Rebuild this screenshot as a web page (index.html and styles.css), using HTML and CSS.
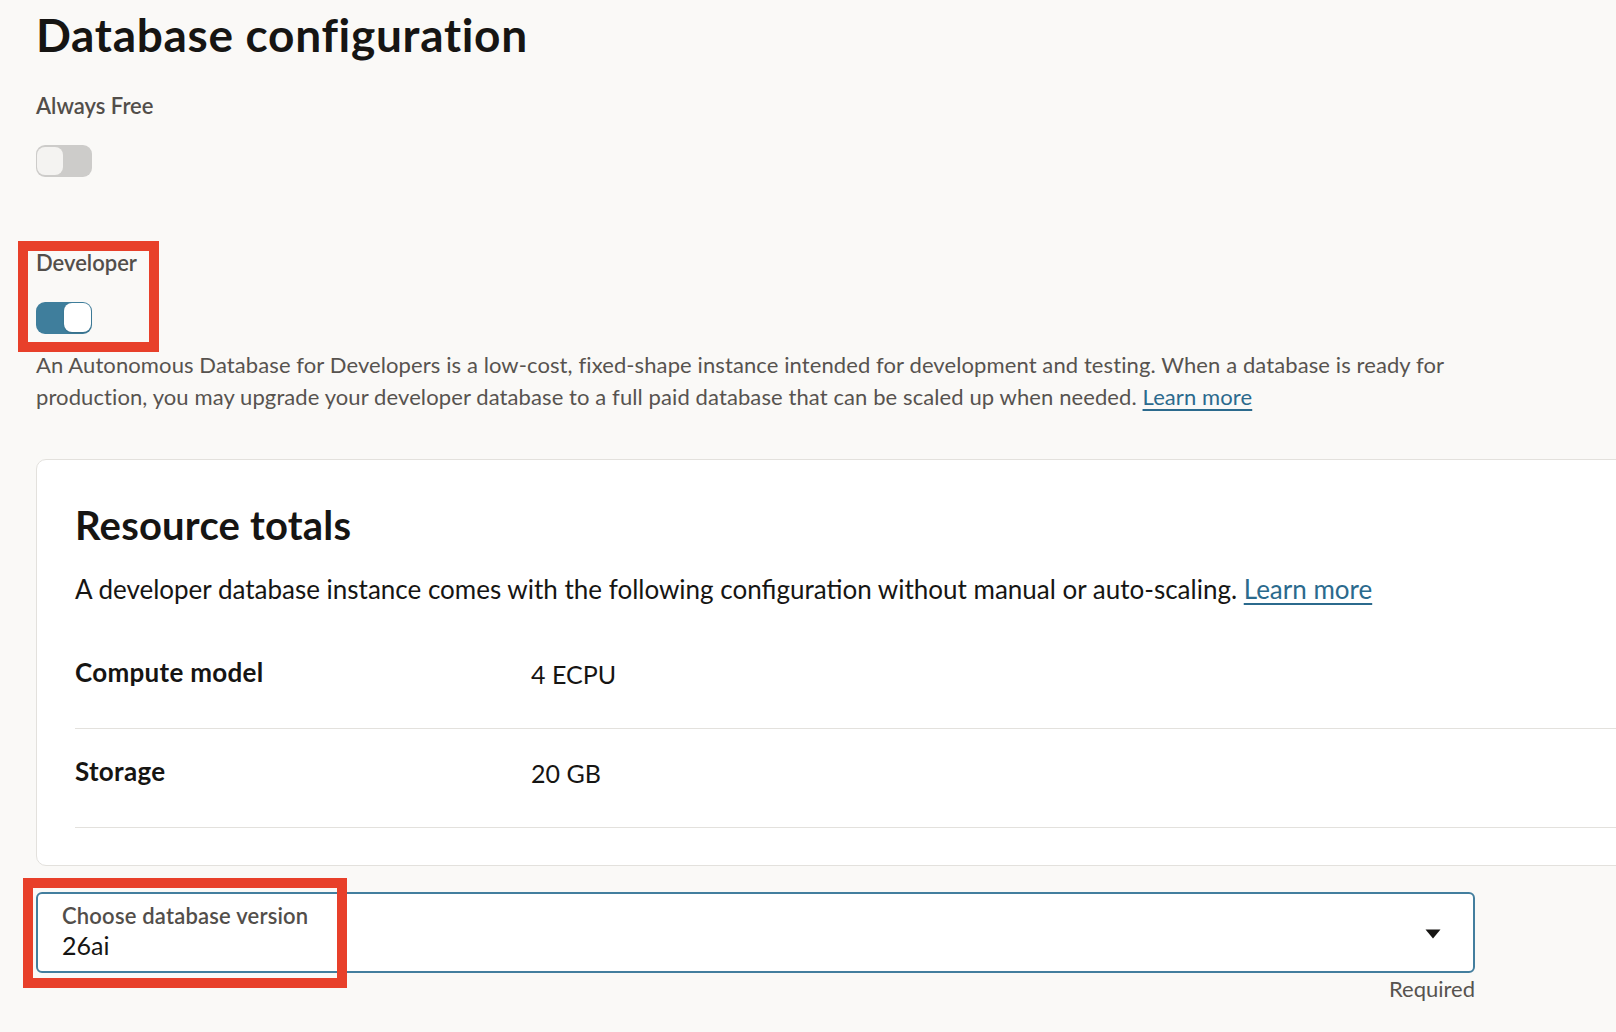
FILE: index.html
```html
<!DOCTYPE html>
<html lang="en">
<head>
<meta charset="utf-8">
<title>Database configuration</title>
<link rel="stylesheet" href="styles.css">
</head>
<body>
<main class="page">
  <h1 class="title">Database configuration</h1>

  <div class="field field-free">
    <div class="field-label">Always Free</div>
    <span class="switch switch-off" role="switch" aria-checked="false"><span class="knob"></span></span>
  </div>

  <div class="field field-dev annot-dev">
    <div class="field-label">Developer</div>
    <span class="switch switch-on" role="switch" aria-checked="true"><span class="knob"></span></span>
  </div>

  <p class="help">An Autonomous Database for Developers is a low-cost, fixed-shape instance intended for development and testing. When a database is ready for production, you may upgrade your developer database to a full paid database that can be scaled up when needed. <a class="link" href="#">Learn more</a></p>

  <section class="card">
    <h2 class="card-title">Resource totals</h2>
    <p class="card-desc">A developer database instance comes with the following configuration without manual or auto-scaling. <a class="link" href="#">Learn more</a></p>
    <dl class="rows">
      <div class="row"><dt class="row-label">Compute model</dt><dd class="row-value">4 ECPU</dd></div>
      <div class="row"><dt class="row-label">Storage</dt><dd class="row-value">20 GB</dd></div>
    </dl>
  </section>

  <div class="select-field">
    <div class="select annot-select">
      <div class="select-text">
        <div class="select-label">Choose database version</div>
        <div class="select-value">26ai</div>
      </div>
      <svg class="caret" width="16" height="10" viewBox="0 0 16 10" aria-hidden="true"><path d="M0.5 0.5 H15.5 L8 9.5 Z" fill="#161513"/></svg>
    </div>
    <div class="required">Required</div>
  </div>
</main>
</body>
</html>
```

FILE: styles.css
```css
html, body {
  margin: 0;
  padding: 0;
}
body {
  background: #faf9f7;
  font-family: Lato, "Noto Sans", "Liberation Sans", sans-serif;
  color: #161513;
  overflow-x: hidden;
}
.page {
  padding: 7px 0 40px 36px;
  width: 1440px;
}
.title {
  margin: 0;
  font-size: 46px;
  line-height: 56px;
  font-weight: 700;
  letter-spacing: 0.7px;
  color: #161513;
}
.field {
  display: flex;
  flex-direction: column;
  align-items: flex-start;
  gap: 27px;
}
.field-free {
  margin-top: 31px;
}
.field-dev {
  margin-top: 74px;
}
.field-label {
  font-size: 22px;
  line-height: 24px;
  font-weight: 600;
  color: #524e4a;
}
.switch {
  display: flex;
  width: 56px;
  height: 32px;
  box-sizing: border-box;
  border-radius: 9px;
  padding: 2px;
}
.switch .knob {
  width: 26px;
  height: 28px;
  box-sizing: border-box;
  border-radius: 8px;
}
.switch-off {
  background: #cdccca;
  justify-content: flex-start;
  padding: 2px 0 2px 1px;
}
.switch-off .knob {
  background: #f4f3f1;
}
.switch-on {
  background: #3f7e9c;
  justify-content: flex-end;
  padding: 1px;
}
.switch-on .knob {
  width: 27px;
  height: 29px;
  background: #ffffff;
  box-shadow: 0 1px 2px rgba(0,0,0,0.15);
}
.annot-dev {
  position: relative;
}
.annot-dev::after {
  content: "";
  position: absolute;
  left: -18px;
  top: -10px;
  width: 141px;
  height: 111px;
  box-sizing: border-box;
  border: 10px solid #e8402a;
  pointer-events: none;
}
.help {
  margin: 15px 0 0;
  font-size: 22px;
  line-height: 32px;
  letter-spacing: 0.1px;
  color: #57534f;
}
.link {
  color: #2b6a8d;
  text-decoration: underline;
  text-underline-offset: 4px;
  text-decoration-thickness: 1.5px;
}
.card {
  margin-top: 46px;
  width: 1700px;
  box-sizing: border-box;
  background: #ffffff;
  border: 1px solid #e3e1dd;
  border-radius: 10px;
  padding: 42px 0 37px 38px;
}
.card-title {
  margin: 0;
  font-size: 40px;
  line-height: 46px;
  font-weight: 700;
  letter-spacing: 0.2px;
  color: #161513;
}
.card-desc {
  margin: 25px 0 0;
  font-size: 26px;
  line-height: 32px;
  color: #161513;
}
.rows {
  margin: 25px 0 0;
}
.row {
  display: grid;
  grid-template-columns: 456px 1fr;
  align-items: start;
  padding: 26px 0 40px;
  border-bottom: 1px solid #e3e1dd;
}
.row-label {
  font-size: 26px;
  line-height: 32px;
  font-weight: 700;
  letter-spacing: 0.3px;
  color: #161513;
}
.row-value {
  margin: 0;
  padding-top: 5px;
  font-size: 25px;
  line-height: 27px;
  color: #161513;
}
.select-field {
  margin-top: 26px;
  width: 1439px;
  display: flex;
  flex-direction: column;
}
.select {
  position: relative;
  display: flex;
  align-items: center;
  height: 81px;
  box-sizing: border-box;
  background: #ffffff;
  border: 2px solid #437e9e;
  border-radius: 6px;
  padding: 0 32px 0 24px;
}
.annot-select::after {
  content: "";
  position: absolute;
  left: -15px;
  top: -16px;
  width: 324px;
  height: 110px;
  box-sizing: border-box;
  border: 10px solid #e8402a;
  pointer-events: none;
}
.select-text {
  flex: 1;
  display: flex;
  flex-direction: column;
  gap: 2px;
  padding-top: 1px;
  padding-bottom: 2px;
}
.select-label {
  font-size: 22px;
  line-height: 24px;
  font-weight: 600;
  letter-spacing: 0.2px;
  color: #524e4a;
}
.select-value {
  font-size: 25px;
  line-height: 30px;
  color: #161513;
}
.caret {
  display: block;
  margin-top: 2px;
}
.required {
  align-self: flex-end;
  margin-top: 4px;
  font-size: 22px;
  line-height: 24px;
  color: #57534f;
}
```
